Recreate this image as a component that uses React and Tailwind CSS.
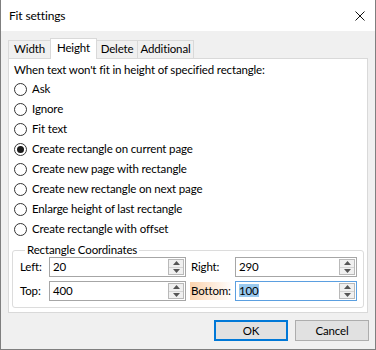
import React, { useState } from 'react';

const options = [
  'Ask',
  'Ignore',
  'Fit text',
  'Create rectangle on current page',
  'Create new page with rectangle',
  'Create new rectangle on next page',
  'Enlarge height of last rectangle',
  'Create rectangle with offset',
];

const tabs = [
  { name: 'Width', w: 'w-[43px]' },
  { name: 'Height', w: 'w-[47px]' },
  { name: 'Delete', w: 'w-[42px]' },
  { name: 'Additional', w: 'w-[57px]' },
];

function Radio({ label, checked, onSelect }) {
  return (
    <label className="flex items-center h-[20px] gap-[5px] cursor-default" onClick={onSelect}>
      <span className="w-[13px] h-[13px] rounded-full border border-[#333333] bg-white flex items-center justify-center">
        {checked && <span className="w-[7px] h-[7px] rounded-full bg-[#1a1a1a]" />}
      </span>
      <span>{label}</span>
    </label>
  );
}

function Spin({ value, width, focused }) {
  return (
    <div
      className={`flex items-center h-[20px] bg-white border ${focused ? 'border-[#5b9fe0]' : 'border-[#a6a6a6]'}`}
      style={{ width }}
    >
      <div className="flex-1 pl-[3px]">
        {focused ? <span className="bg-[#99c9ef]">{value}</span> : value}
      </div>
      <div className="w-[16px] h-[16px] mr-px border border-[#b9b9b9] bg-[#f0f0f0] flex flex-col">
        <div className="flex-1 flex items-center justify-center border-b border-[#d4d4d4]">
          <svg width="7" height="4" viewBox="0 0 7 4"><path d="M3.5 0L7 4H0z" fill="#555" /></svg>
        </div>
        <div className="flex-1 flex items-center justify-center">
          <svg width="7" height="4" viewBox="0 0 7 4"><path d="M0 0h7L3.5 4z" fill="#555" /></svg>
        </div>
      </div>
    </div>
  );
}

export default function App() {
  const [tab, setTab] = useState('Height');
  const [choice, setChoice] = useState(3);

  return (
    <div
      className="w-[376px] h-[350px] flex flex-col border border-[#7f7f7f] border-t-0 bg-[#f0f0f0] text-[11.5px] tracking-[-0.15px] text-black leading-[16px] select-none"
      style={{ fontFamily: '"Segoe UI", Lato, "Noto Sans", sans-serif' }}
    >
      {/* Title bar */}
      <div className="h-[31px] bg-white flex items-center justify-between pl-[8px] pr-[10px] text-[12px]">
        <span>Fit settings</span>
        <svg width="10" height="10" viewBox="0 0 10 10">
          <path d="M0.5 0.5L9.5 9.5M9.5 0.5L0.5 9.5" stroke="#111" strokeWidth="1" />
        </svg>
      </div>

      <div className="flex-1 flex flex-col px-[7px] pt-[7px]">
        {/* Tabs */}
        <div className="flex items-end h-[20px] relative z-10">
          {tabs.map((t) => {
            const active = t.name === tab;
            return (
              <div
                key={t.name}
                onClick={() => setTab(t.name)}
                className={`${t.w} -ml-px first:ml-0 flex justify-center border border-b-0 border-[#d9d9d9] ${
                  active
                    ? 'h-[21px] -mb-px pt-[1px] bg-white relative z-10'
                    : 'h-[18px] bg-[#f0f0f0]'
                }`}
              >
                {t.name}
              </div>
            );
          })}
        </div>

        {/* Panel */}
        <div className="h-[255px] bg-white border border-[#d9d9d9] pl-[5px] pr-[3px] pt-[2px]">
          <div className="h-[18px] flex items-center">When text won't fit in height of specified rectangle:</div>
          <div className="flex flex-col">
            {options.map((o, i) => (
              <Radio key={o} label={o} checked={choice === i} onSelect={() => setChoice(i)} />
            ))}
          </div>

          <fieldset className="mt-[4px] -ml-[2px] border border-[#dcdcdc] rounded-[3px] pl-[7px] pr-[6px] pb-[6px]">
            <legend className="ml-[5px] px-[2px] leading-[14px]">Rectangle Coordinates</legend>
            <div className="flex flex-col gap-[4px]">
              <div className="flex items-center">
                <span className="w-[29px]">Left:</span>
                <Spin value="20" width={137} />
                <span className="w-[49px] pl-[5px]">Right:</span>
                <Spin value="290" width={122} />
              </div>
              <div className="flex items-center">
                <span className="w-[29px]">Top:</span>
                <Spin value="400" width={137} />
                <span className="w-[49px] pl-[4px] flex">
                  <span className="w-[43px] h-[18px] pl-px flex items-center bg-gradient-to-r from-[#fbd3ae] to-white">
                    Bottom:
                  </span>
                </span>
                <Spin value="100" width={122} focused />
              </div>
            </div>
          </fieldset>
        </div>

        {/* Buttons */}
        <div className="flex justify-end gap-[7px] mt-[7px] -mr-px">
          <button className="w-[74px] h-[21px] bg-[#e1e1e1] border-2 border-[#0078d7] flex items-center justify-center">
            OK
          </button>
          <button className="w-[74px] h-[21px] bg-[#e1e1e1] border border-[#adadad] flex items-center justify-center">
            Cancel
          </button>
        </div>
      </div>
    </div>
  );
}
